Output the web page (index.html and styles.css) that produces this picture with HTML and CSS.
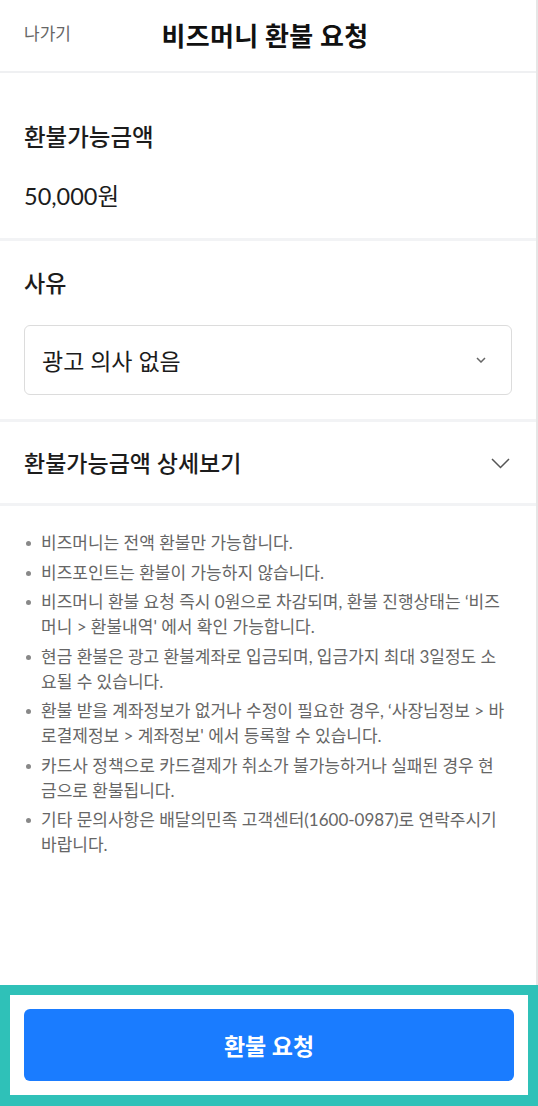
FILE: index.html
```html
<!DOCTYPE html>
<html lang="ko">
<head>
    <meta charset="UTF-8">
    <meta name="viewport" content="width=device-width, initial-scale=1.0">
    <title>비즈머니 환불 요청</title>
    <link rel="stylesheet" href="styles.css">
</head>
<body>
    <div class="page">

        <div class="topbar">
            <a class="back" href="#">나가기</a>
            <h1>비즈머니 환불 요청</h1>
            <span></span>
        </div>

        <div class="section amount">
            <h2>환불가능금액</h2>
            <div class="value">50,000원</div>
        </div>

        <div class="section reason">
            <h2>사유</h2>
            <div class="select">
                <span>광고 의사 없음</span>
                <svg width="10" height="6" viewBox="0 0 10 6">
                    <path d="M1 1l4 4 4-4" fill="none" stroke="#666" stroke-width="1.5"/>
                </svg>
            </div>
        </div>

        <div class="section detail">
            <h2>환불가능금액 상세보기</h2>
            <svg width="19" height="11" viewBox="0 0 19 11">
                <path d="M1 1l8.5 8.5L18 1" fill="none" stroke="#555" stroke-width="1.5"/>
            </svg>
        </div>

        <ul class="notes">
            <li>비즈머니는 전액 환불만 가능합니다.</li>
            <li>비즈포인트는 환불이 가능하지 않습니다.</li>
            <li>비즈머니 환불 요청 즉시 0원으로 차감되며, 환불 진행상태는 ‘비즈머니 &gt; 환불내역' 에서 확인 가능합니다.</li>
            <li>현금 환불은 광고 환불계좌로 입금되며, 입금가지 최대 3일정도 소요될 수 있습니다.</li>
            <li>환불 받을 계좌정보가 없거나 수정이 필요한 경우, ‘사장님정보 &gt; 바로결제정보 &gt; 계좌정보' 에서 등록할 수 있습니다.</li>
            <li>카드사 정책으로 카드결제가 취소가 불가능하거나 실패된 경우 현금으로 환불됩니다.</li>
            <li>기타 문의사항은 배달의민족 고객센터(1600-0987)로 연락주시기 바랍니다.</li>
        </ul>

        <div class="footer">
            <button class="submit">환불 요청</button>
        </div>

    </div>
</body>
</html>
```

FILE: styles.css
```css
* {
    box-sizing: border-box;
}

body {
    margin: 0;
    padding: 0;
    background-color: #fff;
    color: #1c1c1c;
    font-family: Lato, "Noto Sans CJK KR", sans-serif;
}

.page {
    min-height: 1106px;
    display: flex;
    flex-direction: column;
    border-right: 2px solid #e6e6e6;
}

.topbar {
    height: 73px;
    display: grid;
    grid-template-columns: 1fr auto 1fr;
    align-items: center;
    padding: 0 24px 2px;
    border-bottom: 2px solid #eff0f2;
}

.back {
    font-size: 17px;
    color: #666;
    text-decoration: none;
    margin-top: -5px;
}

.topbar h1 {
    margin: 0 0 0 -6px;
    font-size: 26px;
    font-weight: bold;
    letter-spacing: 0.3px;
    color: #111;
}

.section {
    padding: 0 24px;
    border-bottom: 3px solid #f2f3f5;
}

.section h2 {
    margin: 0;
    font-size: 23px;
    font-weight: 500;
    line-height: 30px;
}

.amount {
    padding-top: 49px;
    padding-bottom: 27px;
}

.amount h2 {
    font-size: 23.5px;
}

.amount .value {
    margin-top: 29px;
    font-size: 23.5px;
    line-height: 30px;
}

.reason {
    padding-top: 27px;
    padding-bottom: 24px;
}

.select {
    margin-top: 27px;
    height: 70px;
    border: 1px solid #dcdcdc;
    border-radius: 6px;
    padding: 0 25px 0 17px;
    display: flex;
    align-items: center;
    justify-content: space-between;
    font-size: 23px;
}

.detail {
    padding-top: 26px;
    padding-bottom: 25px;
    padding-right: 26px;
    display: flex;
    align-items: center;
    justify-content: space-between;
}

.notes {
    list-style: none;
    margin: 0;
    padding: 24px 29px 0 24px;
    font-size: 17px;
    line-height: 25px;
    color: #666;
    word-break: break-all;
}

.notes li {
    display: flex;
    margin-bottom: 4.5px;
}

.notes li::before {
    content: "";
    flex-shrink: 0;
    width: 5px;
    height: 5px;
    border-radius: 50%;
    background-color: #888;
    margin: 11px 10px 0 2px;
}

.footer {
    margin-top: auto;
    margin-right: -2px;
    border: 10px solid #2fc1b8;
    border-bottom-width: 11px;
    padding: 14px;
    background-color: #fff;
}

.submit {
    display: block;
    width: 100%;
    height: 72px;
    border: none;
    border-radius: 6px;
    background-color: #1a7cff;
    color: #fff;
    font-family: inherit;
    font-size: 23px;
    font-weight: bold;
}
```
